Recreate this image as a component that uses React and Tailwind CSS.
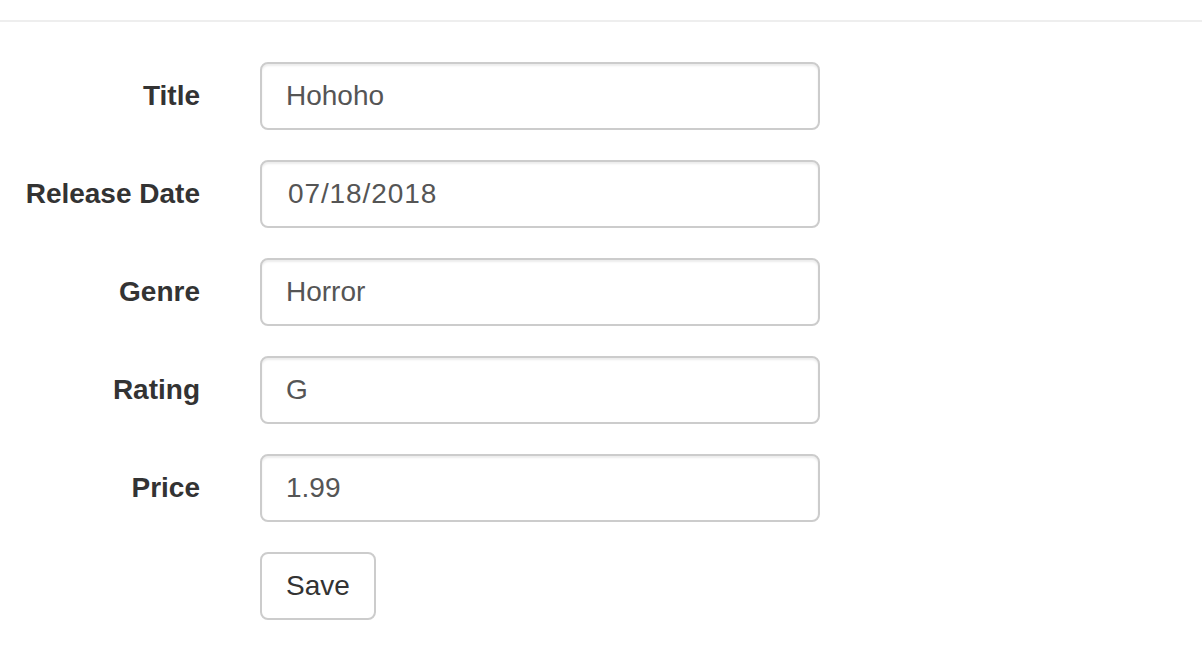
const fields = [
  { label: 'Title', value: 'Hohoho' },
  { label: 'Release Date', value: '07/18/2018', pad: 'pl-[26px] tracking-[0.9px]' },
  { label: 'Genre', value: 'Horror' },
  { label: 'Rating', value: 'G' },
  { label: 'Price', value: '1.99' },
];

export default function App() {
  return (
    <div className="min-h-[646px] bg-white font-['Liberation_Sans',Arial,sans-serif] text-[#333]">
      <div className="pt-[20px]">
        <hr className="border-0 border-t-2 border-[#eee] mb-[40px]" />
      </div>
      <form className="flex flex-col gap-[30px]">
        {fields.map(f => (
          <div key={f.label} className="flex items-start">
            <label className="w-[230px] shrink-0 pr-[30px] pt-[14px] text-right text-[28px] leading-[40px] font-bold">
              {f.label}
            </label>
            <input
              type="text"
              defaultValue={f.value}
              className={`ml-[30px] w-[560px] h-[68px] ${f.pad || 'pl-[24px]'} pr-[24px] text-[28px] text-[#555] bg-white border-2 border-[#ccc] rounded-[8px] shadow-[inset_0_2px_2px_rgba(0,0,0,0.075)] outline-none`}
            />
          </div>
        ))}
        <div className="flex">
          <div className="w-[260px] shrink-0" />
          <button type="button" className="h-[68px] px-[24px] text-[28px] text-[#333] bg-white border-2 border-[#ccc] rounded-[8px]">
            Save
          </button>
        </div>
      </form>
    </div>
  );
}
